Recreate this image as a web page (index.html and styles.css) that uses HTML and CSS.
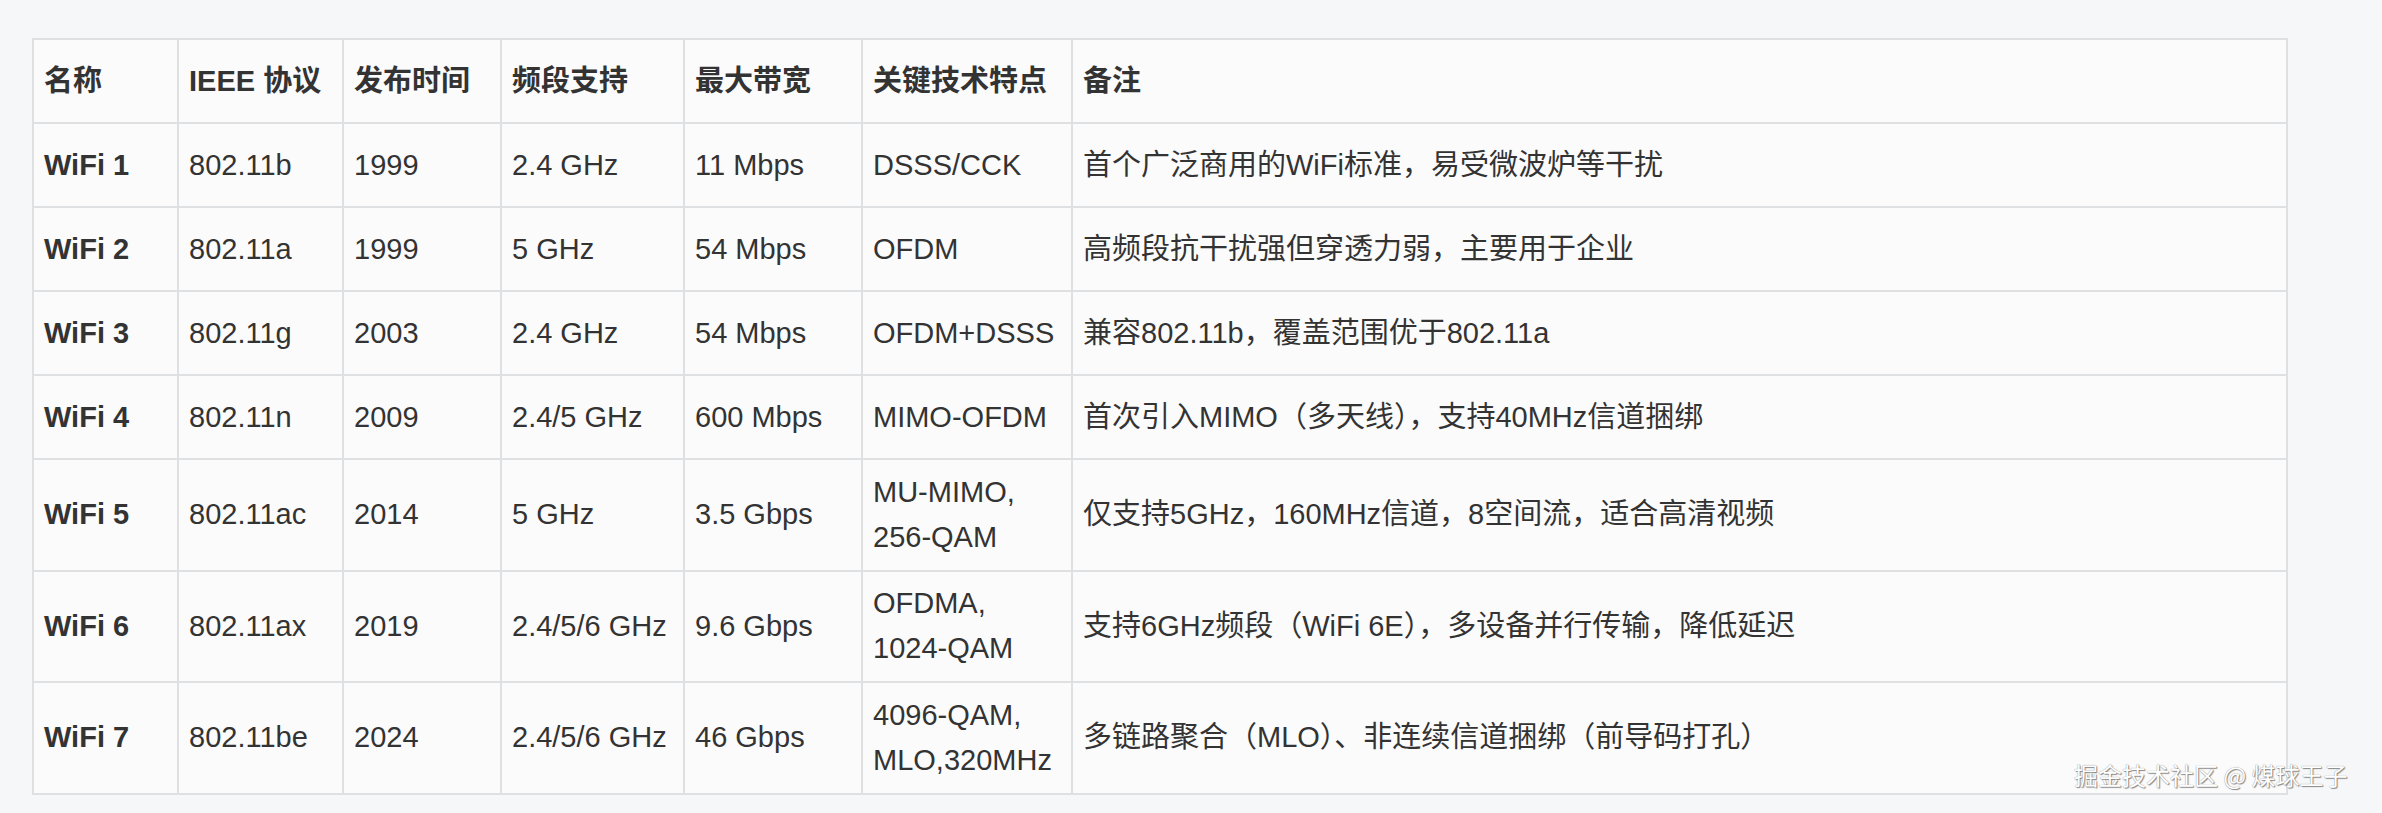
FILE: index.html
```html
<!DOCTYPE html>
<html lang="zh-CN">
<head>
<meta charset="utf-8">
<title>WiFi 标准对比</title>
<link rel="stylesheet" href="styles.css">
</head>
<body>
<div class="page">
  <table class="wifi">
    <colgroup>
      <col class="c1"><col class="c2"><col class="c3"><col class="c4"><col class="c5"><col class="c6"><col class="c7">
    </colgroup>
    <thead>
      <tr class="r84">
        <th>名称</th><th>IEEE 协议</th><th>发布时间</th><th>频段支持</th><th>最大带宽</th><th>关键技术特点</th><th>备注</th>
      </tr>
    </thead>
    <tbody>
      <tr class="r84"><td class="name">WiFi 1</td><td>802.11b</td><td>1999</td><td>2.4 GHz</td><td>11 Mbps</td><td>DSSS/CCK</td><td>首个广泛商用的WiFi标准，易受微波炉等干扰</td></tr>
      <tr class="r84"><td class="name">WiFi 2</td><td>802.11a</td><td>1999</td><td>5 GHz</td><td>54 Mbps</td><td>OFDM</td><td>高频段抗干扰强但穿透力弱，主要用于企业</td></tr>
      <tr class="r84"><td class="name">WiFi 3</td><td>802.11g</td><td>2003</td><td>2.4 GHz</td><td>54 Mbps</td><td>OFDM+DSSS</td><td>兼容802.11b，覆盖范围优于802.11a</td></tr>
      <tr class="r84"><td class="name">WiFi 4</td><td>802.11n</td><td>2009</td><td>2.4/5 GHz</td><td>600 Mbps</td><td>MIMO-OFDM</td><td>首次引入MIMO（多天线），支持40MHz信道捆绑</td></tr>
      <tr class="r111"><td class="name">WiFi 5</td><td>802.11ac</td><td>2014</td><td>5 GHz</td><td>3.5 Gbps</td><td>MU-MIMO,<br>256-QAM</td><td>仅支持5GHz，160MHz信道，8空间流，适合高清视频</td></tr>
      <tr class="r111"><td class="name">WiFi 6</td><td>802.11ax</td><td>2019</td><td>2.4/5/6 GHz</td><td>9.6 Gbps</td><td>OFDMA,<br>1024-QAM</td><td>支持6GHz频段（WiFi 6E），多设备并行传输，降低延迟</td></tr>
      <tr class="r111"><td class="name">WiFi 7</td><td>802.11be</td><td>2024</td><td>2.4/5/6 GHz</td><td>46 Gbps</td><td>4096-QAM,<br>MLO,320MHz</td><td>多链路聚合（MLO）、非连续信道捆绑（前导码打孔）</td></tr>
    </tbody>
  </table>
  <div class="watermark">掘金技术社区 @ 煤球王子</div>
</div>
</body>
</html>
```
FILE: styles.css
```css
html, body {
  margin: 0;
  padding: 0;
}
body {
  background: #f5f7f8;
  width: 2382px;
  height: 813px;
  overflow: hidden;
  font-family: "Liberation Sans", Arial, "Noto Sans CJK SC", sans-serif;
  color: #333333;
}
.page {
  position: relative;
  width: 2382px;
  height: 813px;
  padding: 38px 0 0 32px;
  box-sizing: border-box;
}
.wifi {
  border-collapse: collapse;
  table-layout: fixed;
  width: 2256px;
  background: #fbfbfc;
  font-size: 29px;
  line-height: 45px;
}
.c1 { width: 145px; }
.c2 { width: 165px; }
.c3 { width: 158px; }
.c4 { width: 183px; }
.c5 { width: 178px; }
.c6 { width: 210px; }
.c7 { width: auto; }
.wifi th,
.wifi td {
  border: 2px solid #dfe0e2;
  padding: 0 10px;
  text-align: left;
  vertical-align: middle;
  white-space: nowrap;
}
.wifi th {
  font-weight: bold;
}
.wifi td.name {
  font-weight: bold;
}
.r84 { height: 84px; }
.r111 { height: 111.5px; }
.watermark {
  position: absolute;
  left: 2074px;
  top: 757px;
  font-family: "Noto Sans CJK SC", sans-serif;
  font-size: 24px;
  line-height: 36px;
  color: #ffffff;
  text-shadow: 0 0 1px #777, 1px 1px 1px #888;
}
```
